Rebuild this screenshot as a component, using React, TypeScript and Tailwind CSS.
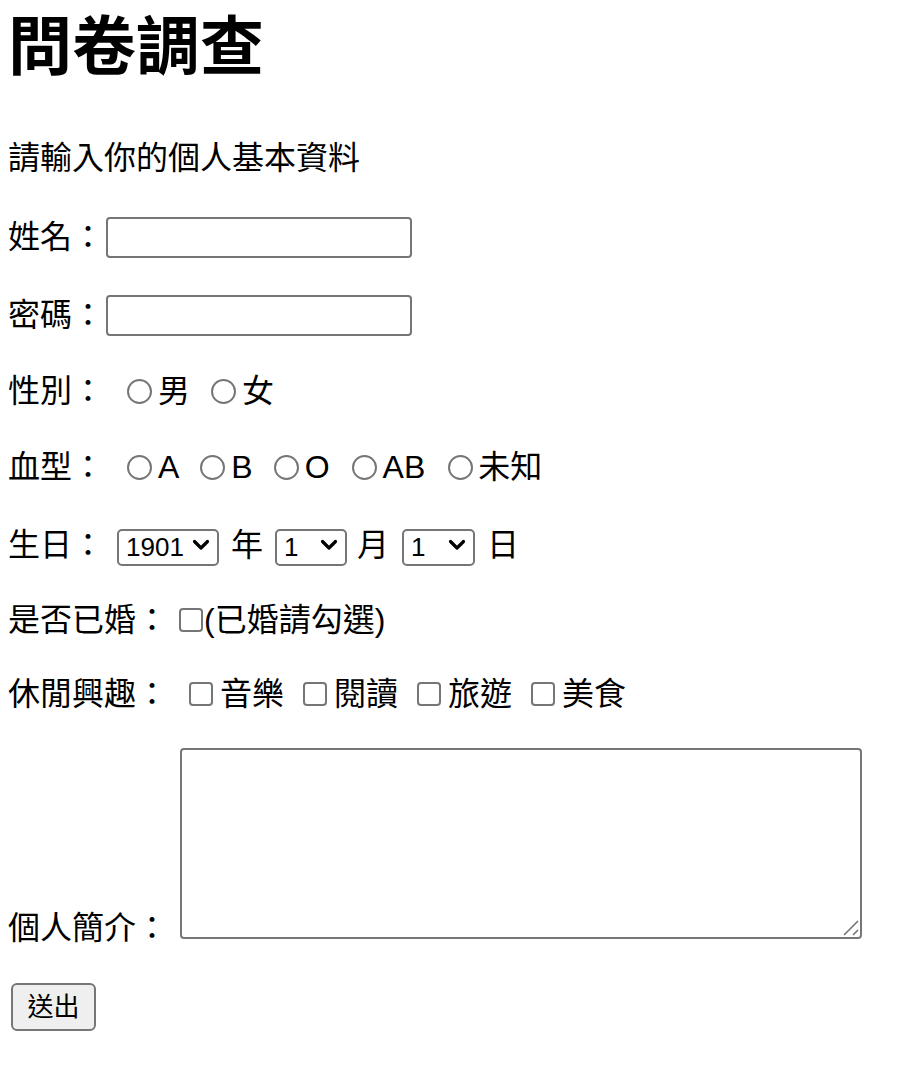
import { useState } from 'react';

function Chevron() {
  return (
    <svg
      width="18"
      height="12"
      viewBox="0 0 18 12"
      className="absolute right-[9px] top-[10px] pointer-events-none"
    >
      <path d="M2.5 2.5 L9 9 L15.5 2.5" fill="none" stroke="#000" strokeWidth="3.2" strokeLinecap="round" strokeLinejoin="round" />
    </svg>
  );
}

function Select({ width, value, options, onChange }: { width: string; value: string; options: string[]; onChange: (v: string) => void }) {
  return (
    <span className={`relative inline-flex ${width}`}>
      <select
        value={value}
        onChange={(e) => onChange(e.target.value)}
        className="appearance-none w-full h-[37px] border-2 border-[#767676] rounded-[5px] bg-white pl-[7px] text-[26px] leading-[33px] text-black outline-none"
      >
        {options.map((o) => (
          <option key={o} value={o}>
            {o}
          </option>
        ))}
      </select>
      <Chevron />
    </span>
  );
}

const years = Array.from({ length: 120 }, (_, i) => String(1901 + i));
const months = Array.from({ length: 12 }, (_, i) => String(i + 1));
const days = Array.from({ length: 31 }, (_, i) => String(i + 1));

export default function App() {
  const [year, setYear] = useState('1901');
  const [month, setMonth] = useState('1');
  const [day, setDay] = useState('1');

  const radio = 'appearance-none shrink-0 w-[25px] h-[25px] rounded-full border-2 border-[#767676] bg-white';
  const checkbox = 'appearance-none shrink-0 w-[24px] h-[24px] rounded-[4px] border-2 border-[#767676] bg-white';

  return (
    <div className="min-h-screen bg-white px-[8px] text-black text-[32px] font-['Liberation_Sans','Noto_Sans_CJK_TC',sans-serif]">
      <h1 className="pt-[15px] text-[64px] leading-[64px] font-bold">問卷調查</h1>

      <form onSubmit={(e) => e.preventDefault()}>
        <p className="mt-[56px] leading-[46px]">請輸入你的個人基本資料</p>

        <div className="mt-[33px] flex items-center h-[46px]">
          <label htmlFor="name">姓名：</label>
          <input id="name" type="text" className="ml-[2px] w-[306px] h-[41px] border-2 border-[#767676] rounded-[4px] px-[4px] text-[26px] outline-none" />
        </div>

        <div className="mt-[32px] flex items-center h-[46px]">
          <label htmlFor="pwd">密碼：</label>
          <input id="pwd" type="password" className="ml-[2px] w-[306px] h-[41px] border-2 border-[#767676] rounded-[4px] px-[4px] text-[26px] outline-none" />
        </div>

        <div className="mt-[30px] flex items-center h-[46px] leading-[46px]">
          <span>性別：</span>
          <input type="radio" name="sex" className={`${radio} ml-[23px]`} />
          <span className="ml-[6px]">男</span>
          <input type="radio" name="sex" className={`${radio} ml-[21px]`} />
          <span className="ml-[6px]">女</span>
        </div>

        <div className="mt-[30px] flex items-center h-[46px] leading-[46px]">
          <span>血型：</span>
          <input type="radio" name="blood" className={`${radio} ml-[23px]`} />
          <span className="ml-[6px]">A</span>
          <input type="radio" name="blood" className={`${radio} ml-[21px]`} />
          <span className="ml-[6px]">B</span>
          <input type="radio" name="blood" className={`${radio} ml-[21px]`} />
          <span className="ml-[6px]">O</span>
          <input type="radio" name="blood" className={`${radio} ml-[22px]`} />
          <span className="ml-[6px]">AB</span>
          <input type="radio" name="blood" className={`${radio} ml-[23px]`} />
          <span className="ml-[5px]">未知</span>
        </div>

        <div className="mt-[32px] flex items-center h-[46px] leading-[46px]">
          <span>生日：</span>
          <span className="ml-[13px]">
            <Select width="w-[102px]" value={year} options={years} onChange={setYear} />
          </span>
          <span className="ml-[12px]">年</span>
          <span className="ml-[12px]">
            <Select width="w-[72px]" value={month} options={months} onChange={setMonth} />
          </span>
          <span className="ml-[10px]">月</span>
          <span className="ml-[13px]">
            <Select width="w-[73px]" value={day} options={days} onChange={setDay} />
          </span>
          <span className="ml-[12px]">日</span>
        </div>

        <div className="mt-[29px] flex items-center h-[46px] leading-[46px]">
          <span>是否已婚：</span>
          <input type="checkbox" className={`${checkbox} ml-[11px]`} />
          <span className="ml-[1px]">(已婚請勾選)</span>
        </div>

        <div className="mt-[28px] flex items-center h-[46px] leading-[46px]">
          <span>休閒興趣：</span>
          <input type="checkbox" className={`${checkbox} ml-[21px]`} />
          <span className="ml-[7px]">音樂</span>
          <input type="checkbox" className={`${checkbox} ml-[19px]`} />
          <span className="ml-[7px]">閱讀</span>
          <input type="checkbox" className={`${checkbox} ml-[19px]`} />
          <span className="ml-[7px]">旅遊</span>
          <input type="checkbox" className={`${checkbox} ml-[19px]`} />
          <span className="ml-[7px]">美食</span>
        </div>

        <div className="mt-[31px] flex items-end">
          <label htmlFor="intro" className="leading-[46px] mb-[-12px]">個人簡介：</label>
          <span className="relative ml-[12px] flex">
            <textarea id="intro" className="w-[682px] h-[191px] border-2 border-[#767676] rounded-[4px] resize-none outline-none p-[4px] text-[26px]" />
            <svg width="16" height="16" viewBox="0 0 16 16" className="absolute right-[3px] bottom-[3px] pointer-events-none">
              <path d="M1 15 L15 1 M10 15 L15 10" stroke="#767676" strokeWidth="1.6" />
            </svg>
          </span>
        </div>

        <button
          type="submit"
          className="mt-[44px] ml-[3px] w-[85px] h-[48px] bg-[#efefef] border-2 border-[#767676] rounded-[6px] text-[26px] leading-[44px] text-black"
        >
          送出
        </button>
      </form>
    </div>
  );
}
